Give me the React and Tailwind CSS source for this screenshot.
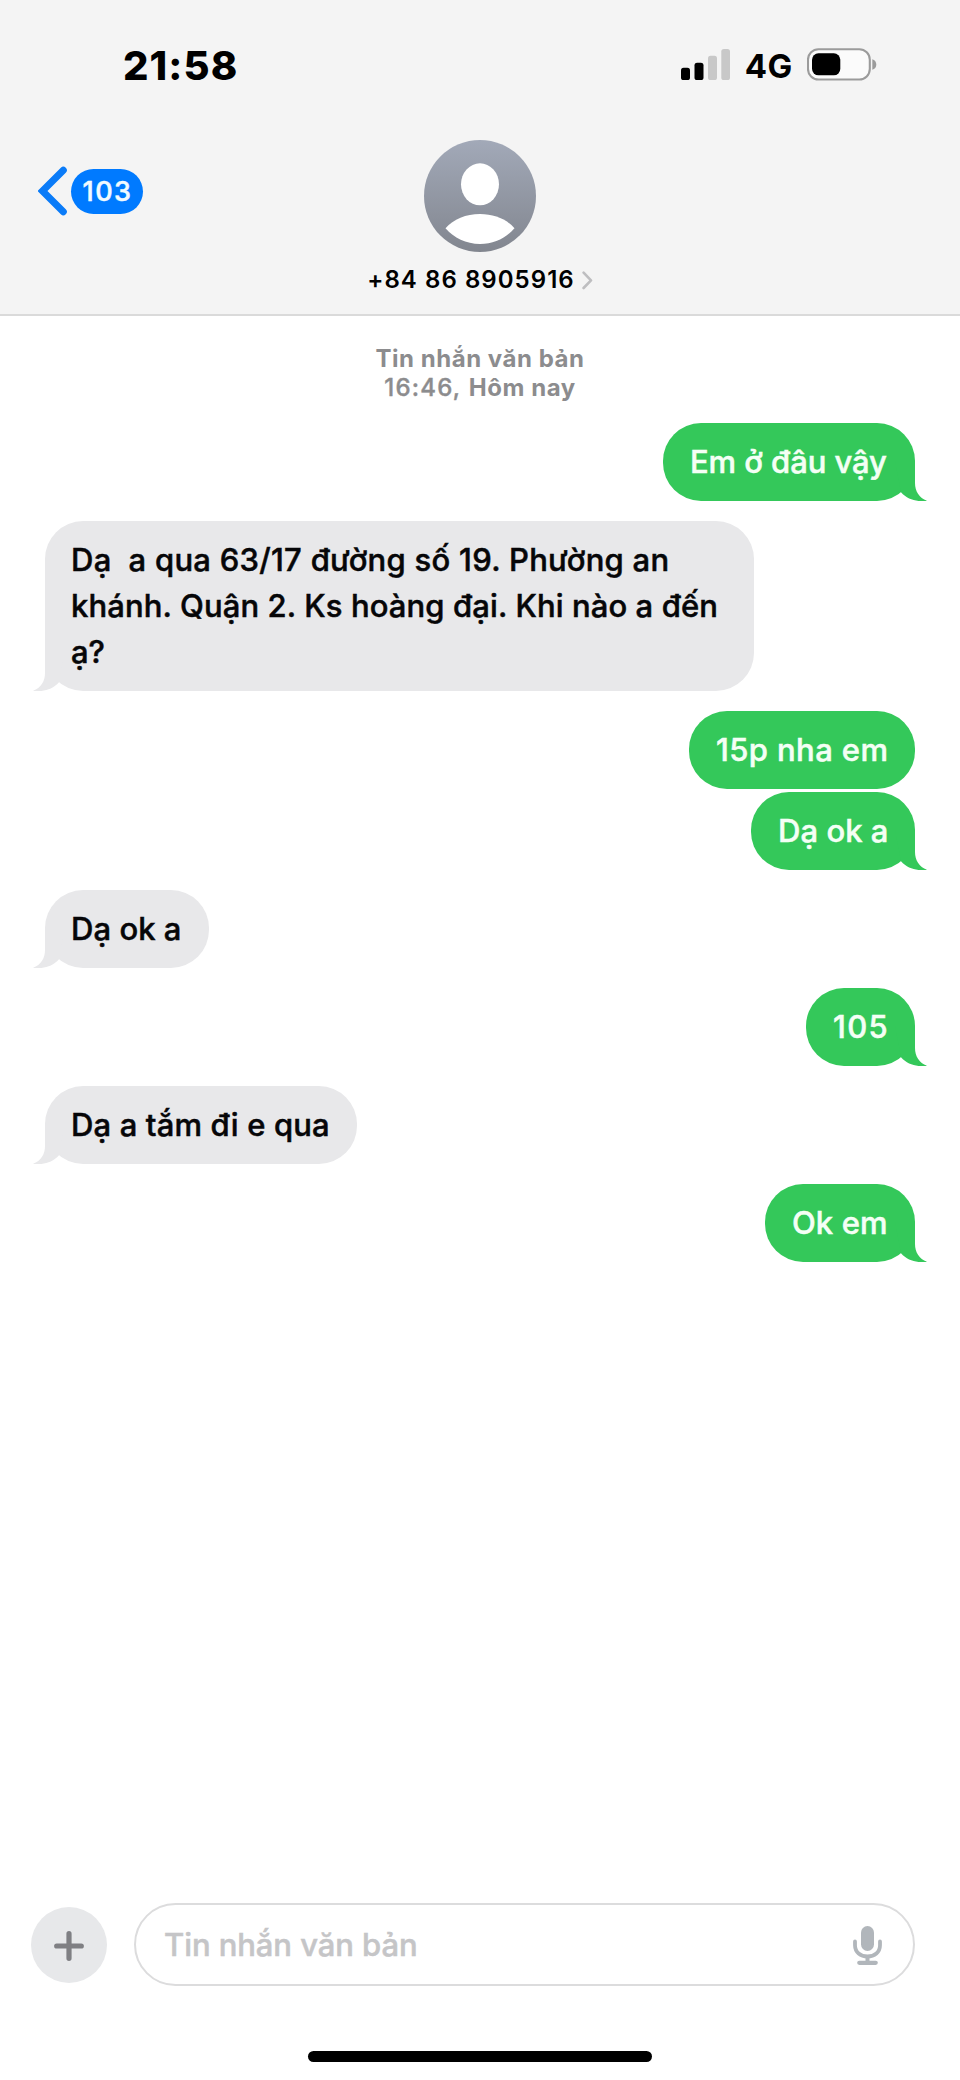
import React from 'react';
import clsx from 'clsx';

const messages = [
  { id: 1, mine: true, tail: true, size: 'w-[252px]', lines: [['Em ở đâu vậy', 'tracking-[-0.07px]']] },
  {
    id: 2,
    mine: false,
    tail: true,
    size: 'w-[709px]',
    lines: [
      ['Dạ  a qua 63/17 đường số 19. Phường an', 'tracking-[0.27px]'],
      ['khánh. Quận 2. Ks hoàng đại. Khi nào a đến', 'tracking-[0.11px]'],
      ['ạ?', 'tracking-normal'],
    ],
  },
  { id: 3, mine: true, tail: false, size: 'w-[226px]', lines: [['15p nha em', 'tracking-[0.4px]']] },
  { id: 4, mine: true, tail: true, size: 'w-[164px]', lines: [['Dạ ok a', 'tracking-[0.05px]']] },
  { id: 5, mine: false, tail: true, size: 'w-[164px]', lines: [['Dạ ok a', 'tracking-[0.05px]']] },
  { id: 6, mine: true, tail: true, size: 'w-[109px]', lines: [['105', 'tracking-[1.3px]']] },
  { id: 7, mine: false, tail: true, size: 'w-[312px]', lines: [['Dạ a tắm đi e qua', 'tracking-[0.14px]']] },
  { id: 8, mine: true, tail: true, size: 'w-[150px]', lines: [['Ok em', 'tracking-[0.1px]']] },
];

const Signal = () => (
  <svg className="h-[31px] w-[49px]" viewBox="0 0 49 31">
    <rect x="0" y="18.7" width="9" height="12.3" rx="2.6" fill="#000" />
    <rect x="13.5" y="13.7" width="9" height="17.3" rx="2.6" fill="#000" />
    <rect x="27" y="6.7" width="9" height="24.3" rx="2.6" fill="#c8c8c8" />
    <rect x="40.3" y="0" width="8.7" height="31" rx="2.6" fill="#c8c8c8" />
  </svg>
);

const Battery = () => (
  <svg className="h-[33px] w-[70px]" viewBox="0 0 70 33">
    <rect x="1" y="1.2" width="61.8" height="30.3" rx="10.5" fill="#fbfbfb" stroke="#9b9b9b" strokeWidth="2.1" />
    <rect x="5" y="5.3" width="28.3" height="22" rx="6.5" fill="#000" />
    <path d="M65.3 11.2c2.4.6 4 2.6 4 5.3s-1.600 4.700-4 5.300z" fill="#9b9b9b" />
  </svg>
);

const Avatar = () => (
  <svg className="h-28 w-28" viewBox="0 0 112 112">
    <defs>
      <linearGradient id="avatarFill" x1="0" y1="0" x2="0" y2="1">
        <stop offset="0" stopColor="#a2a9b8" />
        <stop offset="1" stopColor="#82868f" />
      </linearGradient>
    </defs>
    <circle cx="56" cy="56" r="56" fill="url(#avatarFill)" />
    <ellipse cx="56" cy="44.300" rx="19" ry="21" fill="#fff" />
    <path d="M21.500 88.300C29.500 79 42 74 56 74s26.500 5 34.500 14.300C82 98 70 104 56 104s-26-6-34.500-15.700z" fill="#fff" />
  </svg>
);

// The tail starts inside the bubble, so the rounded corner under it gets covered.
const Tail = ({ mine }) => (
  <svg
    className={clsx('absolute bottom-0 h-[40px] w-[32px]', mine ? '-right-3 text-[#34c85a]' : '-left-3 -scale-x-100 text-[#e8e8ea]')}
    viewBox="0 0 32 40"
  >
    <path d="M0 0H20V22C20 30 24 37 32 39.700C22.500 41.200 13 39 6 31.300z" fill="currentColor" />
  </svg>
);

const Bubble = ({ message, joined }) => {
  const { mine, tail, size, lines } = message;
  return (
    <div className={clsx('flex', mine ? 'justify-end' : 'justify-start', joined ? 'mt-[3px]' : 'mt-5')}>
      <div
        className={clsx(
          'relative rounded-[38px] pt-4 pb-4 text-[31px] leading-[46px] font-medium whitespace-pre [-webkit-text-stroke:0.5px]',
          size,
          mine ? 'bg-[#34c85a] pl-[27px] text-[#f4fff5]' : 'bg-[#e8e8ea] pl-[26px] text-[#060608]'
        )}
      >
        {tail && <Tail mine={mine} />}
        {lines.map(([text, tracking]) => (
          <div key={text} className={clsx('relative', tracking)}>
            {text}
          </div>
        ))}
      </div>
    </div>
  );
};

const Header = () => (
  <header className="h-[316px] border-b-2 border-[#dadada] bg-[#f4f4f4]">
    {/* Status bar */}
    <div className="flex h-32 items-center justify-between pr-[83px] pl-[123px]">
      <span className="pt-[3px] text-[40px] font-extrabold tracking-[1.1px] text-black">21:58</span>
      <div className="flex items-center">
        <Signal />
        <span className="mr-[14px] ml-[15px] pt-[5px] text-[33px] font-bold tracking-[0.6px] text-black">4G</span>
        <Battery />
      </div>
    </div>

    {/* Contact */}
    <div className="grid grid-cols-3">
      <button className="flex items-center self-start pt-[38px] pl-[38px]">
        <svg className="h-[50px] w-[30px]" viewBox="0 0 30 50">
          <path d="M25.300 4.200L4.500 25L25.300 45.800" fill="none" stroke="#0a7bf8" strokeWidth="7" strokeLinecap="round" />
        </svg>
        <span className="mt-px ml-[3px] flex h-[45px] w-[72px] items-center justify-center rounded-full bg-[#007aff] pt-px pl-px text-[27px] font-medium tracking-[1.4px] text-[#f2faff] [-webkit-text-stroke:0.5px]">
          103
        </span>
      </button>
      <div className="flex flex-col items-center pt-3">
        <Avatar />
        <div className="mt-[13px] flex items-center">
          <span className="text-2xl leading-[30px] font-semibold tracking-[1.05px] whitespace-nowrap text-black">+84 86 8905916</span>
          <svg className="ml-[7px] h-[20px] w-[11px]" viewBox="0 0 11 20">
            <path d="M1.600 2.600L9 10.300L1.600 18" fill="none" stroke="#bebec0" strokeWidth="2.600" strokeLinecap="round" strokeLinejoin="round" />
          </svg>
        </div>
      </div>
    </div>
  </header>
);

const Composer = () => (
  <footer>
    <div className="flex items-center pr-[45px] pl-[31px]">
      <button className="flex h-[76px] w-[76px] items-center justify-center rounded-full bg-[#e7e8ea]">
        <svg className="mt-[2px] h-[30px] w-[30px]" viewBox="0 0 30 30">
          <path d="M15 2.700V27.300M2.700 15H27.300" stroke="#7f7f83" strokeWidth="5.200" strokeLinecap="round" />
        </svg>
      </button>
      <div className="ml-[27px] flex h-[83px] flex-1 items-center justify-between rounded-[42px] border-2 border-[#dcdcdd] bg-white pr-[31px] pl-[28px]">
        <span className="pt-px text-[31px] font-medium tracking-[-0.07px] text-[#c5c5c7] [-webkit-text-stroke:0.5px]">Tin nhắn văn bản</span>
        <svg className="mt-[2px] h-[39px] w-[29px]" viewBox="0 0 29 39">
          <rect x="8" y="0" width="13" height="25" rx="6.500" fill="#b1b6bb" />
          <path d="M2 15.500v3.800C2 26.300 7.500 30.500 14.500 30.500S27 26.300 27 19.300V15.500" fill="none" stroke="#b1b6bb" strokeWidth="3.800" strokeLinecap="round" />
          <path d="M14.500 31v5" stroke="#b1b6bb" strokeWidth="4" />
          <path d="M6.300 36.800H22.700" stroke="#b1b6bb" strokeWidth="4.300" strokeLinecap="round" />
        </svg>
      </div>
    </div>

    {/* Home indicator */}
    <div className="flex justify-center pt-[65px] pb-[18px]">
      <div className="h-[11px] w-[344px] rounded-full bg-black" />
    </div>
  </footer>
);

export default function App() {
  return (
    <div className="flex h-[2080px] w-full flex-col overflow-hidden bg-white font-['Inter',sans-serif]">
      <Header />
      <main className="flex-1 px-[45px] pt-7">
        <div className="mb-[21px] text-center text-2xl leading-[29px] text-[#8c8c8e]">
          <div className="font-bold tracking-[0.53px]">Tin nhắn văn bản</div>
          <div>
            <span className="font-medium tracking-[1.25px] [-webkit-text-stroke:0.4px]">16:46, </span>
            <span className="font-bold tracking-[0.55px]">Hôm nay</span>
          </div>
        </div>
        <div>
          {messages.map((message, i) => (
            <Bubble key={message.id} message={message} joined={i > 0 && !messages[i - 1].tail} />
          ))}
        </div>
      </main>
      <Composer />
    </div>
  );
}
